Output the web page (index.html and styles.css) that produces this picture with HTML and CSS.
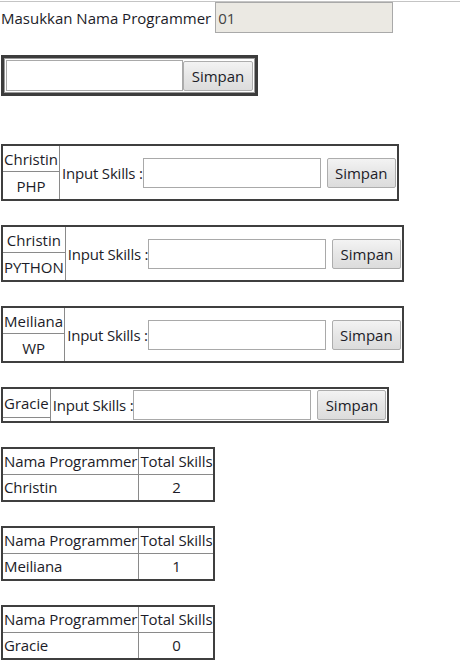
FILE: index.html
```html
<!DOCTYPE html>
<html>
<head>
<meta charset="utf-8">
<link rel="stylesheet" href="styles.css">
</head>
<body>
<div class="topline"></div>
<div class="row1">
  <span class="label">Masukkan Nama Programmer</span>
  <input class="ro" value="01" readonly>
</div>
<div class="form2">
  <div class="form2-in">
    <input class="txt2" type="text">
    <button class="btn">Simpan</button>
  </div>
</div>

<div class="skill">
  <div class="name">Christin</div>
  <div class="act"><span>Input Skills :</span><input class="txt" type="text"><button class="btn">Simpan</button></div>
  <div class="lang">PHP</div>
</div>

<div class="skill">
  <div class="name">Christin</div>
  <div class="act"><span>Input Skills :</span><input class="txt" type="text"><button class="btn">Simpan</button></div>
  <div class="lang">PYTHON</div>
</div>

<div class="skill">
  <div class="name">Meiliana</div>
  <div class="act"><span>Input Skills :</span><input class="txt" type="text"><button class="btn">Simpan</button></div>
  <div class="lang">WP</div>
</div>

<div class="skill empty">
  <div class="name">Gracie</div>
  <div class="act"><span>Input Skills :</span><input class="txt" type="text"><button class="btn">Simpan</button></div>
  <div class="lang"></div>
</div>

<div class="sum">
  <div class="c h">Nama Programmer</div><div class="c h r">Total Skills</div>
  <div class="c b">Christin</div><div class="c b r ctr">2</div>
</div>

<div class="sum">
  <div class="c h">Nama Programmer</div><div class="c h r">Total Skills</div>
  <div class="c b">Meiliana</div><div class="c b r ctr">1</div>
</div>

<div class="sum">
  <div class="c h">Nama Programmer</div><div class="c h r">Total Skills</div>
  <div class="c b">Gracie</div><div class="c b r ctr">0</div>
</div>
</body>
</html>
```
FILE: styles.css
```css
html, body {
  margin: 0;
  padding: 0;
  background: #ffffff;
}
body {
  font-family: "Open Sans", "Noto Sans", sans-serif;
  font-size: 15px;
  color: #1c1c28;
}
.topline {
  margin-top: 1px;
  height: 1px;
  background: #c4c4c4;
}
.row1 {
  display: flex;
  align-items: center;
  height: 31px;
  padding-left: 1px;
}
.label {
  line-height: 20px;
  margin-right: 4px;
}
input {
  font-family: inherit;
  font-size: 15px;
  box-sizing: border-box;
  margin: 0;
  outline: none;
}
.ro {
  width: 178px;
  height: 31px;
  border: 1px solid #a9a9a9;
  background: #ebe9e3;
  color: #444;
  padding: 0 2px;
}
.form2 {
  display: flex;
  width: max-content;
  margin: 22px 0 0 1px;
  border: 3px solid #3c3c3c;
}
.form2-in {
  display: flex;
  align-items: center;
  border: 1px solid #9a9a9a;
  padding: 1px;
}
.txt2 {
  width: 177px;
  height: 31px;
  border: 1px solid #a9a9a9;
  background: #fff;
}
.btn {
  font-family: inherit;
  font-size: 15px;
  color: #1c1c28;
  height: 30px;
  padding: 0 6px;
  border: 1px solid #adadad;
  border-radius: 2px;
  background: linear-gradient(#f3f3f3, #e6e6e6 50%, #dcdcdc);
  margin: 0;
}
.form2 .btn {
  width: 70px;
}
.skill {
  display: grid;
  width: max-content;
  grid-template-columns: auto auto;
  grid-template-rows: 26px 27px;
  border: 2px solid #3f3f3f;
  margin: 24px 0 0 1px;
}
.form2 + .skill {
  margin-top: 48px;
}
.skill.empty {
  grid-template-rows: 29px 3px;
}
.name, .lang {
  grid-column: 1;
  display: flex;
  align-items: center;
  justify-content: center;
  padding: 0 1px;
  box-sizing: border-box;
  border-right: 1px solid #8a8a8a;
  line-height: 20px;
}
.name {
  grid-row: 1;
  border-bottom: 1px solid #8a8a8a;
}
.lang {
  grid-row: 2;
}
.act {
  grid-column: 2;
  grid-row: 1 / span 2;
  display: flex;
  align-items: center;
  padding: 0 1px 0 2px;
}
.act span {
  letter-spacing: -0.2px;
}
.txt {
  width: 178px;
  height: 30px;
  border: 1px solid #a9a9a9;
  background: #fff;
  margin-right: 6px;
}
.act .btn {
  width: 69px;
}
.sum {
  display: grid;
  width: max-content;
  grid-template-columns: auto auto;
  border: 2px solid #3f3f3f;
  margin: 24px 0 0 1px;
  letter-spacing: -0.1px;
}
.c {
  box-sizing: border-box;
  padding: 0 1px;
}
.c.h {
  height: 26px;
  line-height: 25px;
  border-bottom: 1px solid #8a8a8a;
}
.c.b {
  height: 25px;
  line-height: 25px;
}
.c.r {
  border-left: 1px solid #8a8a8a;
}
.ctr {
  text-align: center;
}
```
